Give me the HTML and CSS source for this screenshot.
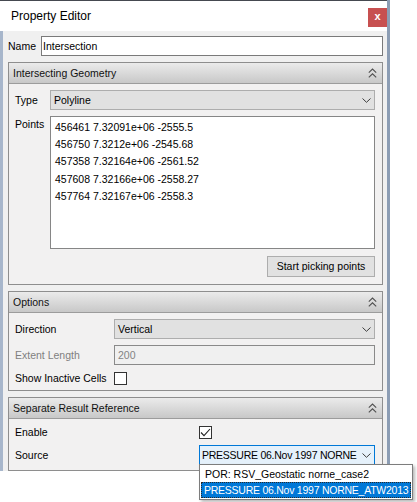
FILE: index.html
```html
<!DOCTYPE html>
<html>
<head>
<meta charset="utf-8">
<title>Property Editor</title>
<link rel="stylesheet" href="styles.css">
</head>
<body>
<div class="window">
  <div class="titlebar">
    <span class="title">Property Editor</span>
    <span class="close">x</span>
  </div>
  <div class="content">
    <div class="name-row">
      <span class="name-label">Name</span>
      <div class="field name-field">Intersection</div>
    </div>

    <section class="group">
      <div class="group-header">
        <span>Intersecting Geometry</span>
        <svg class="collapse" width="9" height="10" viewBox="0 0 9 10"><polyline points="0.8,4.6 4.5,1 8.2,4.6" /><polyline points="0.8,9.4 4.5,5.8 8.2,9.4" /></svg>
      </div>
      <div class="group-body geo">
        <span class="lbl">Type</span>
        <div class="combo"><span>Polyline</span><svg class="chev" width="9" height="5" viewBox="0 0 9 5"><polyline points="0.5,0.5 4.5,4.3 8.5,0.5" /></svg></div>
        <span class="lbl lbl-top">Points</span>
        <div class="textbox">
          <div>456461 7.32091e+06 -2555.5</div>
          <div>456750 7.3212e+06 -2545.68</div>
          <div>457358 7.32164e+06 -2561.52</div>
          <div>457608 7.32166e+06 -2558.27</div>
          <div>457764 7.32167e+06 -2558.3</div>
        </div>
        <div class="btn-row"><span class="btn">Start picking points</span></div>
      </div>
    </section>

    <section class="group">
      <div class="group-header">
        <span>Options</span>
        <svg class="collapse" width="9" height="10" viewBox="0 0 9 10"><polyline points="0.8,4.6 4.5,1 8.2,4.6" /><polyline points="0.8,9.4 4.5,5.8 8.2,9.4" /></svg>
      </div>
      <div class="group-body opts">
        <span class="lbl">Direction</span>
        <div class="combo"><span>Vertical</span><svg class="chev" width="9" height="5" viewBox="0 0 9 5"><polyline points="0.5,0.5 4.5,4.3 8.5,0.5" /></svg></div>
        <span class="lbl disabled">Extent Length</span>
        <div class="field disabled-field">200</div>
        <span class="lbl">Show Inactive Cells</span>
        <div class="check-cell"><span class="checkbox"></span></div>
      </div>
    </section>

    <section class="group">
      <div class="group-header">
        <span>Separate Result Reference</span>
        <svg class="collapse" width="9" height="10" viewBox="0 0 9 10"><polyline points="0.8,4.6 4.5,1 8.2,4.6" /><polyline points="0.8,9.4 4.5,5.8 8.2,9.4" /></svg>
      </div>
      <div class="group-body srr">
        <span class="lbl">Enable</span>
        <div class="check-cell"><span class="checkbox"><svg width="11" height="11" viewBox="0 0 11 11"><polyline points="1,5.5 4,8.6 10,2" /></svg></span></div>
        <span class="lbl">Source</span>
        <div class="combo combo-focus"><span class="caps">PRESSURE 06.Nov 1997 NORNE</span><svg class="chev" width="9" height="5" viewBox="0 0 9 5"><polyline points="0.5,0.5 4.5,4.3 8.5,0.5" /></svg></div>
      </div>
    </section>
  </div>
</div>

<div class="popup">
  <div class="item">POR: RSV_Geostatic norne_case2</div>
  <div class="item selected caps">PRESSURE 06.Nov 1997 NORNE_ATW2013</div>
</div>
</body>
</html>
```

FILE: styles.css
```css
* { box-sizing: border-box; }

html, body {
  margin: 0;
  padding: 0;
  background: #ffffff;
}

body {
  width: 417px;
  height: 502px;
  position: relative;
  overflow: hidden;
  font-family: "Liberation Sans", Arial, sans-serif;
  font-size: 10.5px;
  color: #000;
}

.window {
  width: 390px;
  border-right: 3px solid #8c9db4;
}

.titlebar {
  height: 31px;
  border-top: 1px solid #454950;
  background: #ffffff;
  display: flex;
  justify-content: space-between;
  align-items: flex-start;
  padding-left: 11px;
}

.title {
  font-size: 12px;
  line-height: 16px;
  margin-top: 7px;
  color: #000;
}

.close {
  width: 19px;
  height: 19px;
  margin-top: 7px;
  background: #c75050;
  color: #fff;
  font-weight: bold;
  font-size: 11px;
  line-height: 17px;
  text-align: center;
}

.content {
  background: #f0f0f0;
  border-left: 3px solid #a7b6cb;
  padding: 5px 4px 0 5px;
  display: flex;
  flex-direction: column;
  gap: 6px;
}

.name-row {
  display: flex;
  align-items: center;
  height: 20px;
}

.name-label {
  width: 33px;
}

.field {
  height: 20px;
  border: 1px solid #7a7a7a;
  background: #fff;
  padding-left: 1px;
  line-height: 18px;
  white-space: nowrap;
}

.name-field {
  flex: 1;
}

.disabled-field {
  background: #f0f0f0;
  border-color: #8a8a8a;
  color: #838383;
  padding-left: 3px;
}

.group {
  border: 1px solid #8e8e8e;
  background: #f2f1f1;
}

.group-header {
  height: 21px;
  border-bottom: 1px solid #9c9c9c;
  background: linear-gradient(#ebebeb, #c8c8c8);
  display: flex;
  align-items: center;
  justify-content: space-between;
  padding: 0 5px 0 4px;
  color: #111;
}

.collapse polyline,
.chev polyline {
  fill: none;
  stroke: #505050;
  stroke-width: 1.1;
}

.chev polyline {
  stroke: #3c3c3c;
  stroke-width: 1;
}

.group-body {
  display: grid;
  align-items: center;
  row-gap: 6px;
  padding: 6px 7px 5px 6px;
}

.geo {
  grid-template-columns: 35px 1fr;
  grid-template-rows: 20px 133px 22px;
  padding-bottom: 7px;
}

.opts {
  grid-template-columns: 99px 1fr;
  grid-template-rows: 20px 20px 14px;
}

.srr {
  grid-template-columns: 184px 1fr;
  grid-template-rows: 14px 20px;
}

.lbl {
  white-space: nowrap;
  line-height: 13px;
}

.lbl-top {
  align-self: start;
  padding-top: 2px;
}

.disabled {
  color: #7f7f7f;
}

.combo {
  height: 20px;
  border: 1px solid #adadad;
  background: #e1e1e1;
  display: flex;
  align-items: center;
  justify-content: space-between;
  padding: 0 3px 0 3px;
  white-space: nowrap;
  overflow: hidden;
}

.combo .chev {
  flex: none;
  margin-top: 1px;
}

.combo-focus {
  background: #e5f1fb;
  border-color: #0078d7;
  padding-left: 2px;
}

.caps {
  letter-spacing: -0.25px;
}

.textbox {
  height: 133px;
  border: 1px solid #868686;
  background: #fff;
  padding: 2px 4px;
  line-height: 17.2px;
  white-space: nowrap;
}

.btn-row {
  grid-column: 1 / -1;
  align-self: stretch;
  display: flex;
  justify-content: flex-end;
  align-items: flex-end;
}

.btn {
  width: 108px;
  height: 21px;
  border: 1px solid #adadad;
  background: #e1e1e1;
  text-align: center;
  line-height: 19px;
}

.check-cell {
  display: flex;
  align-items: center;
}

.checkbox {
  width: 13px;
  height: 13px;
  border: 1px solid #333;
  background: #fff;
  display: flex;
  align-items: center;
  justify-content: center;
}

.checkbox polyline {
  fill: none;
  stroke: #222;
  stroke-width: 1.1;
}

.popup {
  position: absolute;
  left: 199px;
  top: 464px;
  width: 214px;
  height: 36px;
  border: 1px solid #7d7d7d;
  background: #fff;
  padding: 1px;
  box-shadow: 2px 2px 3px rgba(0, 0, 0, 0.28);
}

.item {
  height: 16px;
  line-height: 16px;
  padding-left: 4px;
  white-space: nowrap;
}

.item.selected {
  background: #0078d7;
  color: #fff;
  outline: 1px dotted #2a2a2a;
  outline-offset: -1px;
  padding-left: 3px;
}
```
